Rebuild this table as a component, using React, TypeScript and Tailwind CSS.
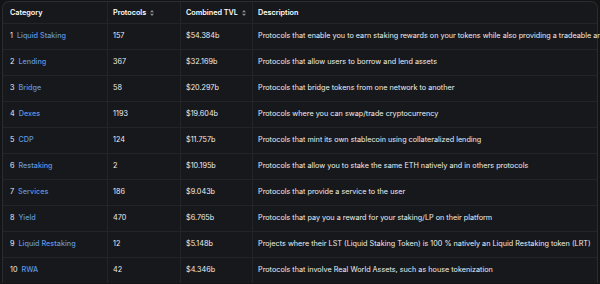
import React from "react";

type Row = { name: string; protocols: number; tvl: string; description: string };

const rows: Row[] = [
  { name: "Liquid Staking", protocols: 157, tvl: "$54.384b", description: "Protocols that enable you to earn staking rewards on your tokens while also providing a tradeable and liquid receipt for your staked position" },
  { name: "Lending", protocols: 367, tvl: "$32.169b", description: "Protocols that allow users to borrow and lend assets" },
  { name: "Bridge", protocols: 58, tvl: "$20.297b", description: "Protocols that bridge tokens from one network to another" },
  { name: "Dexes", protocols: 1193, tvl: "$19.604b", description: "Protocols where you can swap/trade cryptocurrency" },
  { name: "CDP", protocols: 124, tvl: "$11.757b", description: "Protocols that mint its own stablecoin using collateralized lending" },
  { name: "Restaking", protocols: 2, tvl: "$10.195b", description: "Protocols that allow you to stake the same ETH natively and in others protocols" },
  { name: "Services", protocols: 186, tvl: "$9.043b", description: "Protocols that provide a service to the user" },
  { name: "Yield", protocols: 470, tvl: "$6.765b", description: "Protocols that pay you a reward for your staking/LP on their platform" },
  { name: "Liquid Restaking", protocols: 12, tvl: "$5.148b", description: "Projects where their LST (Liquid Staking Token) is 100 % natively an Liquid Restaking token (LRT)" },
  { name: "RWA", protocols: 42, tvl: "$4.346b", description: "Protocols that involve Real World Assets, such as house tokenization" },
];

function SortIcon() {
  return (
    <svg width="6" height="8" viewBox="0 0 6 8" className="ml-[3px] inline-block text-[#8a8d93]" fill="currentColor">
      <path d="M3 1 L5 3.2 H1 Z" />
      <path d="M3 7 L5 4.8 H1 Z" />
    </svg>
  );
}

export default function App() {
  return (
    <div
      className="h-[284px] w-[600px] overflow-hidden bg-[#131416] pl-[2px] pt-px text-[7.25px] text-[#eceef0]"
      style={{ fontFamily: "Inter, 'Noto Sans', sans-serif" }}
    >
      <div className="w-[596px] rounded-t-[7px] border border-b-0 border-[#2a2c30] bg-[#17181b]">
        <div className="grid h-[21px] grid-cols-[104px_73px_72px_1fr] items-center font-semibold text-white">
          <div className="pl-[7px] pt-px">Category</div>
          <div className="flex h-full items-center border-l border-[#222428] pl-[5px] pt-px">
            Protocols
            <SortIcon />
          </div>
          <div className="flex h-full items-center border-l border-[#222428] pl-[5px] pt-px">
            Combined TVL
            <SortIcon />
          </div>
          <div className="flex h-full items-center border-l border-[#222428] pl-[5px] pt-px">Description</div>
        </div>
        {rows.map((r, i) => (
          <div
            key={r.name}
            className="grid h-[26px] grid-cols-[104px_73px_72px_1fr] items-center border-t border-[#222428]"
          >
            <div className="flex items-center gap-[4px] pl-[7px]">
              <span>{i + 1}</span>
              <span className="font-medium text-[#6095de]">{r.name}</span>
            </div>
            <div className="flex h-full items-center border-l border-[#222428] pl-[5px]">{r.protocols}</div>
            <div className="flex h-full items-center border-l border-[#222428] pl-[5px]">{r.tvl}</div>
            <div className="flex h-full items-center whitespace-nowrap border-l border-[#222428] pl-[5px]">
              {r.description}
            </div>
          </div>
        ))}
      </div>
    </div>
  );
}
